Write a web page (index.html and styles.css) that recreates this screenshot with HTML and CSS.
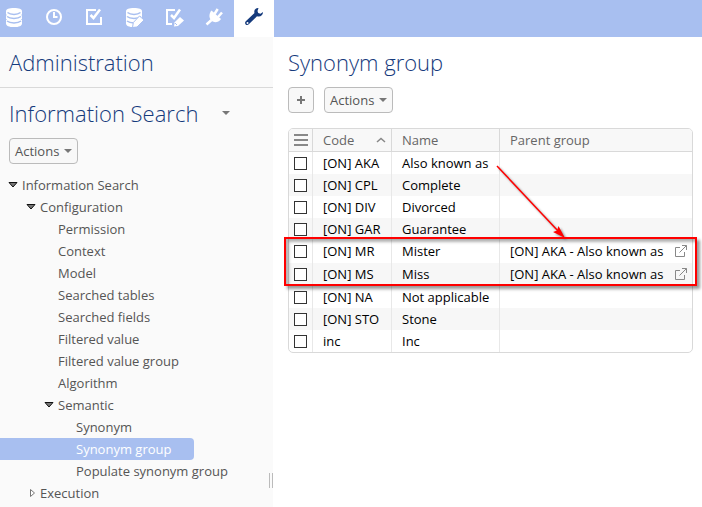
FILE: index.html
```html
<!DOCTYPE html>
<html lang="en">
<head>
<meta charset="utf-8">
<title>Synonym group</title>
<link rel="stylesheet" href="styles.css">
</head>
<body>
<header class="topbar">
  <nav class="tabs" aria-label="Sections">
    <a class="tab" href="#" aria-label="Data"><svg width="20" height="20" viewBox="0 0 20 20" fill="currentColor"><path d="M2 4.200C2 2.200 5 1 10 1s8 1.200 8 3.200v12.200C18 18.800 15 20 10 20s-8-1.200-8-3.600z"/><path fill="none" stroke="#a8bff0" stroke-width="1.500" d="M3.500 5.500c3 2.500 10 2.500 13 0M3 9.500c3 2.500 11 2.500 14 0M3 14c3 2.500 11 2.500 14 0"/><path fill="#a8bff0" d="M1.500 7l1.500 1-1.500 1zM18.500 7L17 8l1.500 1zM1.500 11.500l1.500 1-1.500 1zM18.500 11.500l-1.500 1 1.500 1z"/></svg></a>
    <a class="tab" href="#" aria-label="History"><svg width="20" height="20" viewBox="0 0 20 20" fill="none" stroke="currentColor" stroke-width="2"><circle cx="10" cy="10" r="7"/><path d="M10 5v5h3.500"/></svg></a>
    <a class="tab" href="#" aria-label="Tasks"><svg width="20" height="20" viewBox="0 0 20 20" fill="none" stroke="currentColor" stroke-width="2"><path d="M12 3H3v14h14v-7"/><path stroke-width="2.500" d="M6.500 8l3 3L16 2.500"/></svg></a>
    <a class="tab" href="#" aria-label="Edit data"><svg width="20" height="20" viewBox="0 0 20 20" fill="currentColor"><path d="M2 4.200C2 2.200 5 1 10 1s8 1.200 8 3.200v12.200C18 18.800 15 20 10 20s-8-1.200-8-3.600z"/><path fill="none" stroke="#a8bff0" stroke-width="1.500" d="M3.500 5.500c3 2.500 10 2.500 13 0M3 9.500c3 2.500 11 2.500 14 0M3 14c3 2.500 11 2.500 14 0"/><path stroke="#a8bff0" d="M8.500 20.500l.8-5L15.500 9l4.500 4-7 7z"/><path fill="#a8bff0" d="M19 14v6.500h-6z"/></svg></a>
    <a class="tab" href="#" aria-label="Edit tasks"><svg width="20" height="20" viewBox="0 0 20 20" fill="none" stroke="currentColor" stroke-width="2"><path d="M11 3H3v14h5"/><path stroke-width="2.500" d="M7 8l3 3L16 2.500"/><path fill="currentColor" stroke="none" d="M10 19.500l.7-4.300L16 10l4 3.500-6 5.500z"/><path stroke="#a8bff0" stroke-width="1" d="M11 16l2 2"/></svg></a>
    <a class="tab" href="#" aria-label="Connections"><svg width="20" height="20" viewBox="0 0 20 20" fill="none" stroke="currentColor" stroke-width="2"><path fill="currentColor" stroke="none" d="M7.500 3.500l9.500 8.500c-2.500 3.500-6.500 4-9.300 2C5 11.500 4.500 7 7.500 3.500z"/><path stroke-width="2.500" d="M10.500 7l3.200-5M14 10l4-4.500M7.500 13l-5 4.500"/></svg></a>
    <a class="tab tab-active" href="#" aria-label="Administration" aria-current="page"><svg width="20" height="20" viewBox="0 0 20 20"><path fill="currentColor" d="M14.500 1c-2.500-.3-5 2-4 5l-8.700 8.300c-2 2.200.7 5 3 3L13 9.200c3 1 6-.7 6-4.200l-2.500 1.800-2.300-.7L13.500 4z"/><circle cx="3.500" cy="16" r="1" fill="#fff"/></svg></a>
  </nav>
</header>
<div class="layout">
  <aside class="sidebar">
    <h1 class="title section-title">Administration</h1>
    <div class="perspective">
      <h2 class="title">Information Search</h2>
      <button class="caret-button" type="button" aria-label="Select perspective"><svg class="caret" width="8" height="4" viewBox="0 0 8 4"><path d="M0 0h8L4 4z"/></svg></button>
    </div>
    <div class="side-actions">
      <button class="button" type="button" aria-haspopup="menu">Actions<svg class="caret" width="8" height="4" viewBox="0 0 8 4"><path d="M0 0h8L4 4z"/></svg></button>
    </div>
    <nav class="tree" aria-label="Navigation">
      <a class="node level-0" href="#"><svg class="twisty" width="10" height="6" viewBox="0 0 10 6"><path class="open" d="M1 .5h8L5 5z"/></svg>Information Search</a>
      <a class="node level-1" href="#"><svg class="twisty" width="10" height="6" viewBox="0 0 10 6"><path class="open" d="M1 .5h8L5 5z"/></svg>Configuration</a>
      <a class="node level-2 leaf" href="#">Permission</a>
      <a class="node level-2 leaf" href="#">Context</a>
      <a class="node level-2 leaf" href="#">Model</a>
      <a class="node level-2 leaf" href="#">Searched tables</a>
      <a class="node level-2 leaf" href="#">Searched fields</a>
      <a class="node level-2 leaf" href="#">Filtered value</a>
      <a class="node level-2 leaf" href="#">Filtered value group</a>
      <a class="node level-2 leaf" href="#">Algorithm</a>
      <a class="node level-2" href="#"><svg class="twisty" width="10" height="6" viewBox="0 0 10 6"><path class="open" d="M1 .5h8L5 5z"/></svg>Semantic</a>
      <a class="node level-3 leaf" href="#">Synonym</a>
      <a class="node level-3 leaf selected" href="#" aria-current="page">Synonym group</a>
      <a class="node level-3 leaf" href="#">Populate synonym group</a>
      <a class="node level-1" href="#"><svg class="twisty" width="10" height="8" viewBox="0 0 10 8"><path class="closed" d="M4.500 .5v7L8.500 4z"/></svg>Execution</a>
    </nav>
    <span class="grip"></span>
  </aside>
  <main class="content">
    <h2 class="title">Synonym group</h2>
    <div class="toolbar">
      <button class="button button-add" type="button" aria-label="Add"><svg width="8" height="8" viewBox="0 0 8 8"><path d="M4 0v8M0 4h8" stroke="#777" stroke-width="2"/></svg></button>
      <button class="button" type="button" aria-haspopup="menu">Actions<svg class="caret" width="8" height="4" viewBox="0 0 8 4"><path d="M0 0h8L4 4z"/></svg></button>
    </div>
    <div class="table-area">
      <table class="grid">
        <colgroup><col class="col-check"><col class="col-code"><col class="col-name"><col></colgroup>
        <thead>
          <tr>
            <th class="check"><button class="menu-button" type="button" aria-label="Table menu"><svg width="14" height="12" viewBox="0 0 14 12"><path d="M0 1h14M0 6h14M0 11h14" stroke="#888" stroke-width="2"/></svg></button></th>
            <th><span class="sorted">Code<svg width="10" height="6" viewBox="0 0 10 6"><path d="M1 5l4-3.500L9 5" fill="none" stroke="#888" stroke-width="1.500"/></svg></span></th>
            <th>Name</th>
            <th>Parent group</th>
          </tr>
        </thead>
        <tbody>
          <tr><td class="check"><input type="checkbox" aria-label="Select AKA"></td><td>[ON] AKA</td><td>Also known as</td><td></td></tr>
          <tr><td class="check"><input type="checkbox" aria-label="Select CPL"></td><td>[ON] CPL</td><td>Complete</td><td></td></tr>
          <tr><td class="check"><input type="checkbox" aria-label="Select DIV"></td><td>[ON] DIV</td><td>Divorced</td><td></td></tr>
          <tr><td class="check"><input type="checkbox" aria-label="Select GAR"></td><td>[ON] GAR</td><td>Guarantee</td><td></td></tr>
          <tr class="linked"><td class="check"><input type="checkbox" aria-label="Select MR"></td><td>[ON] MR</td><td>Mister</td><td><span class="parent">[ON] AKA - Also known as<a class="open-link" href="#" aria-label="Open AKA"><svg width="12" height="12" viewBox="0 0 12 12"><path d="M5 2.500H.5v9h9V7M7 .5h4.500V5M11.500 .5L4.500 7.500"/></svg></a></span></td></tr>
          <tr class="linked"><td class="check"><input type="checkbox" aria-label="Select MS"></td><td>[ON] MS</td><td>Miss</td><td><span class="parent">[ON] AKA - Also known as<a class="open-link" href="#" aria-label="Open AKA"><svg width="12" height="12" viewBox="0 0 12 12"><path d="M5 2.500H.5v9h9V7M7 .5h4.500V5M11.500 .5L4.500 7.500"/></svg></a></span></td></tr>
          <tr><td class="check"><input type="checkbox" aria-label="Select NA"></td><td>[ON] NA</td><td>Not applicable</td><td></td></tr>
          <tr><td class="check"><input type="checkbox" aria-label="Select STO"></td><td>[ON] STO</td><td>Stone</td><td></td></tr>
          <tr><td class="check"><input type="checkbox" aria-label="Select inc"></td><td>inc</td><td>Inc</td><td></td></tr>
        </tbody>
      </table>
      <svg class="arrow" width="80" height="84" viewBox="0 0 80 84"><path d="M1 1l62 66" stroke="#f00" stroke-width="1.500"/><path d="M69 73l-12-6 4-1.500 1.500-4.500z" fill="#f00"/></svg>
      <span class="highlight"></span>
    </div>
  </main>
</div>
</body>
</html>
```

FILE: styles.css
```css
* {
  box-sizing: border-box;
}

body {
  margin: 0;
  min-height: 100vh;
  display: flex;
  flex-direction: column;
  background: #fff;
  color: #000;
  font: 13px/22px "Open Sans", sans-serif;
}

a {
  color: inherit;
  text-decoration: none;
}

button {
  font: inherit;
  color: inherit;
  cursor: pointer;
}

svg {
  display: block;
  flex: none;
}

.topbar {
  background: #a8bff0;
  overflow: hidden;
}

.tabs {
  display: flex;
  margin-left: -6px;
}

.tab {
  width: 40px;
  height: 37px;
  padding-top: 7px;
  display: flex;
  justify-content: center;
  color: #fff;
}

.tab-active {
  background: #fff;
  color: #153a7c;
}

.layout {
  flex: 1;
  display: flex;
}

.sidebar {
  position: relative;
  flex: none;
  width: 273px;
  background: #fafafa;
  color: #555;
}

.title {
  margin: 0;
  color: #153a7c;
  font-size: 22px;
  font-weight: 300;
  line-height: 30px;
}

.section-title {
  padding: 10px 9px;
  border-bottom: 1px solid #d9d9d9;
}

.perspective {
  display: flex;
  align-items: center;
  gap: 20px;
  padding: 10px 9px;
}

.caret-button {
  padding: 4px;
  border: 0;
  background: none;
}

.caret {
  fill: #777;
}

.button {
  display: flex;
  align-items: center;
  gap: 5px;
  height: 26px;
  padding: 0 5px;
  border: 1px solid #bbb;
  border-radius: 4px;
  background: #f8f8f8;
  color: #555;
}

.side-actions {
  padding: 0 9px 10px;
}

.node {
  display: flex;
  align-items: center;
  height: 22px;
  white-space: nowrap;
}

.twisty {
  margin-right: 4px;
}

.open {
  fill: #777;
  stroke: #111;
}

.closed {
  fill: #fff;
  stroke: #777;
}

.level-0 {
  padding-left: 8px;
}

.level-1 {
  padding-left: 26px;
}

.level-2 {
  padding-left: 44px;
}

.level-2.leaf {
  padding-left: 58px;
}

.level-3.leaf {
  padding-left: 76px;
}

.selected {
  width: 194px;
  border-radius: 0 4px 4px 0;
  background: #a8bff0;
  color: #fff;
}

.grip {
  position: absolute;
  right: 0;
  bottom: 19px;
  width: 4px;
  height: 15px;
  border: solid #bbb;
  border-width: 0 1px;
}

.content {
  flex: 1;
  min-width: 0;
  padding: 10px 9px 16px 15px;
}

.toolbar {
  display: flex;
  gap: 10px;
  padding: 10px 0 15px;
}

.button-add {
  width: 26px;
  justify-content: center;
}

.table-area {
  position: relative;
}

.grid {
  width: 100%;
  table-layout: fixed;
  border: 1px solid #d9d9d9;
  border-radius: 5px;
  border-collapse: separate;
  border-spacing: 0;
  overflow: hidden;
}

.col-check {
  width: 24px;
}

.col-code {
  width: 79px;
}

.col-name {
  width: 108px;
}

th,
td {
  height: 22px;
  padding: 0 5px 0 10px;
  border-right: 1px solid #e8e8e8;
  text-align: left;
  line-height: 20px;
  white-space: nowrap;
}

th {
  height: 23px;
  border-right-color: #d9d9d9;
  border-bottom: 1px solid #d9d9d9;
  background: #f8f8f8;
  color: #666;
  font-weight: 400;
}

th:last-child,
td:last-child {
  border-right: 0;
}

tbody tr:nth-child(even) {
  background: #f7f7f7;
}

.linked td {
  height: 23px;
  padding-bottom: 1px;
}

.check {
  padding: 0 5px;
}

input {
  appearance: none;
  display: block;
  width: 13px;
  height: 13px;
  margin: 0;
  border: 1px solid #333;
  background: #fff;
}

.menu-button {
  display: block;
  padding: 0;
  border: 0;
  background: none;
}

.sorted,
.parent {
  display: flex;
  align-items: center;
  justify-content: space-between;
}

.open-link svg {
  fill: none;
  stroke: #888;
}

.highlight {
  position: absolute;
  top: 109px;
  right: -4px;
  left: -4px;
  height: 49px;
  border: 2px solid #f00;
  box-shadow: 3px 3px 3px rgba(0, 0, 0, 0.4), inset 3px 3px 3px rgba(0, 0, 0, 0.3);
  pointer-events: none;
}

.arrow {
  position: absolute;
  top: 37px;
  left: 208px;
  filter: drop-shadow(2px 2px 1px rgba(0, 0, 0, 0.4));
  pointer-events: none;
}
```
